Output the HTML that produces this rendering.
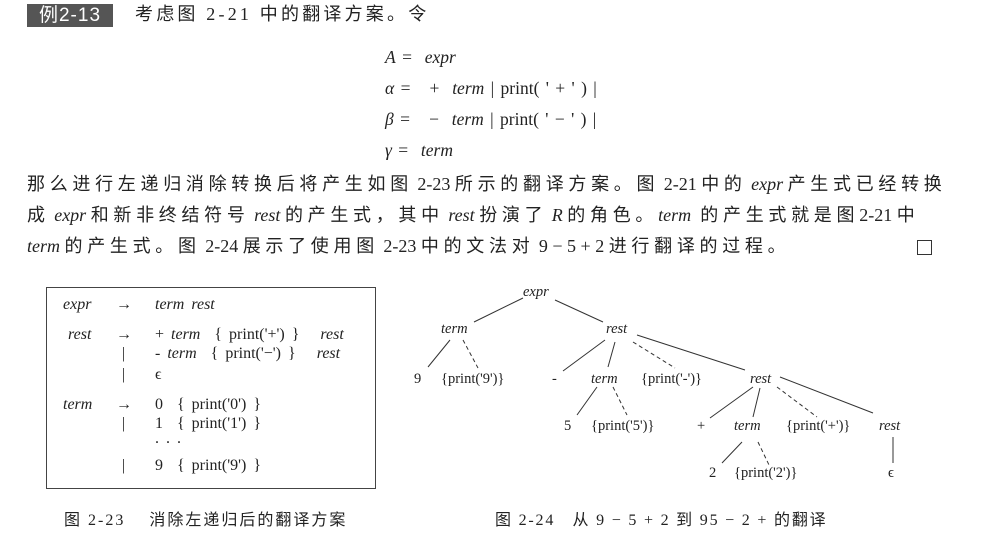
<!DOCTYPE html>
<html><head><meta charset="utf-8"><style>
body{margin:0;width:982px;height:547px;background:#fff;position:relative;overflow:hidden;font-family:"Liberation Serif","Noto Serif CJK SC",serif;color:#222}
.a{position:absolute;white-space:nowrap;line-height:1}
.i{font-style:italic}
.s{font-family:"Liberation Sans","Noto Sans CJK SC",sans-serif}
.c{font-family:"Liberation Serif","Noto Sans CJK SC",serif}
.p{font-size:18px;letter-spacing:4.7px}
.p i,.p b{letter-spacing:0;font-weight:normal}
</style></head><body>
<div class="a s" style="left:27px;top:4px;width:86px;height:23px;background:#555;color:#fff;font-size:19px;line-height:23px;text-align:center;letter-spacing:1px">例2-13</div>
<div class="a c" style="left:135px;top:5px;font-size:18px;letter-spacing:3.2px">考虑图 2-21 中的翻译方案。令</div>
<div style="font-size:17.5px;word-spacing:2px">
<div class="a" style="left:385px;top:49px"><span class="i">A</span> = &nbsp;<span class="i">expr</span></div>
<div class="a" style="left:385px;top:80px"><span class="i">α</span> = &nbsp; + &nbsp;<span class="i">term</span> | print( ' + ' ) |</div>
<div class="a" style="left:385px;top:111px"><span class="i">β</span> = &nbsp; − &nbsp;<span class="i">term</span> | print( ' − ' ) |</div>
<div class="a" style="left:385px;top:142px"><span class="i">γ</span> = &nbsp;<span class="i">term</span></div>
</div>
<div class="a c p" style="left:27px;top:175px">那么进行左递归消除转换后将产生如图<b> 2-23 </b>所示的翻译方案。图<b> 2-21 </b>中的<i> expr </i>产生式已经转换</div>
<div class="a c p" style="left:27px;top:206px">成<i> expr </i>和新非终结符号<i> rest </i>的产生式，其中<i> rest </i>扮演了<i> R </i>的角色。<i>term</i> 的产生式就是图<b>2-21 </b>中</div>
<div class="a c p" style="left:27px;top:237px"><i>term </i>的产生式。图<b> 2-24 </b>展示了使用图<b> 2-23 </b>中的文法对<b> 9 − 5 + 2 </b>进行翻译的过程。</div>
<div class="a" style="left:917px;top:240px;width:13px;height:13px;border:1px solid #333"></div>

<div class="a" style="left:46px;top:287px;width:328px;height:200px;border:1px solid #444"></div>
<div style="font-size:16px;word-spacing:3px">
<div class="a i" style="left:63px;top:297px">expr</div><div class="a" style="left:116px;top:297px">→</div><div class="a i" style="left:155px;top:297px">term rest</div>
<div class="a i" style="left:68px;top:327px">rest</div><div class="a" style="left:116px;top:327px">→</div><div class="a" style="left:155px;top:327px">+ <i>term</i> &nbsp;{ print('+') } &nbsp; <i>rest</i></div>
<div class="a" style="left:122px;top:346px">|</div><div class="a" style="left:155px;top:346px">- <i>term</i> &nbsp;{ print('−') } &nbsp; <i>rest</i></div>
<div class="a" style="left:122px;top:367px">|</div><div class="a" style="left:155px;top:367px">ϵ</div>
<div class="a i" style="left:63px;top:397px">term</div><div class="a" style="left:116px;top:397px">→</div><div class="a" style="left:155px;top:397px">0 &nbsp;{ print('0') }</div>
<div class="a" style="left:122px;top:416px">|</div><div class="a" style="left:155px;top:416px">1 &nbsp;{ print('1') }</div>
<div class="a" style="left:155px;top:431px">. . .</div>
<div class="a" style="left:122px;top:458px">|</div><div class="a" style="left:155px;top:458px">9 &nbsp;{ print('9') }</div>
</div>
<div class="a c" style="left:64px;top:513px;font-size:16px;letter-spacing:2px">图 2-23 &nbsp;&nbsp;&nbsp;消除左递归后的翻译方案</div>

<div style="font-size:14.5px">
<div class="a i" style="left:523px;top:285px">expr</div>
<div class="a i" style="left:441px;top:322px">term</div>
<div class="a i" style="left:606px;top:322px">rest</div>
<div class="a" style="left:414px;top:372px">9</div>
<div class="a" style="left:441px;top:372px">{print('9')}</div>
<div class="a" style="left:552px;top:372px">-</div>
<div class="a i" style="left:591px;top:372px">term</div>
<div class="a" style="left:641px;top:372px">{print('-')}</div>
<div class="a i" style="left:750px;top:372px">rest</div>
<div class="a" style="left:564px;top:419px">5</div>
<div class="a" style="left:591px;top:419px">{print('5')}</div>
<div class="a" style="left:697px;top:419px">+</div>
<div class="a i" style="left:734px;top:419px">term</div>
<div class="a" style="left:786px;top:419px">{print('+')}</div>
<div class="a i" style="left:879px;top:419px">rest</div>
<div class="a" style="left:709px;top:466px">2</div>
<div class="a" style="left:734px;top:466px">{print('2')}</div>
<div class="a" style="left:888px;top:466px">ϵ</div>
</div>
<svg class="a" style="left:0;top:0" width="982" height="547" stroke="#333" stroke-width="1" fill="none">
<path d="M523 298L474 322M555 300L603 322M450 340L428 367M605 340L563 371M615 342L608 367M637 335L745 370M753 387L710 418M760 388L753 417M780 377L873 413M597 387L577 415M742 442L722 463M893 437L893 463"/>
<path stroke-dasharray="4 3" d="M463 340L478 368M633 342L675 368M777 387L817 417M613 387L627 415M758 442L770 467"/>
</svg>
<div class="a c" style="left:495px;top:513px;font-size:16px;letter-spacing:1.8px">图 2-24 &nbsp;&nbsp;从 9 − 5 + 2 到 95 − 2 + 的翻译</div>
</body></html>
